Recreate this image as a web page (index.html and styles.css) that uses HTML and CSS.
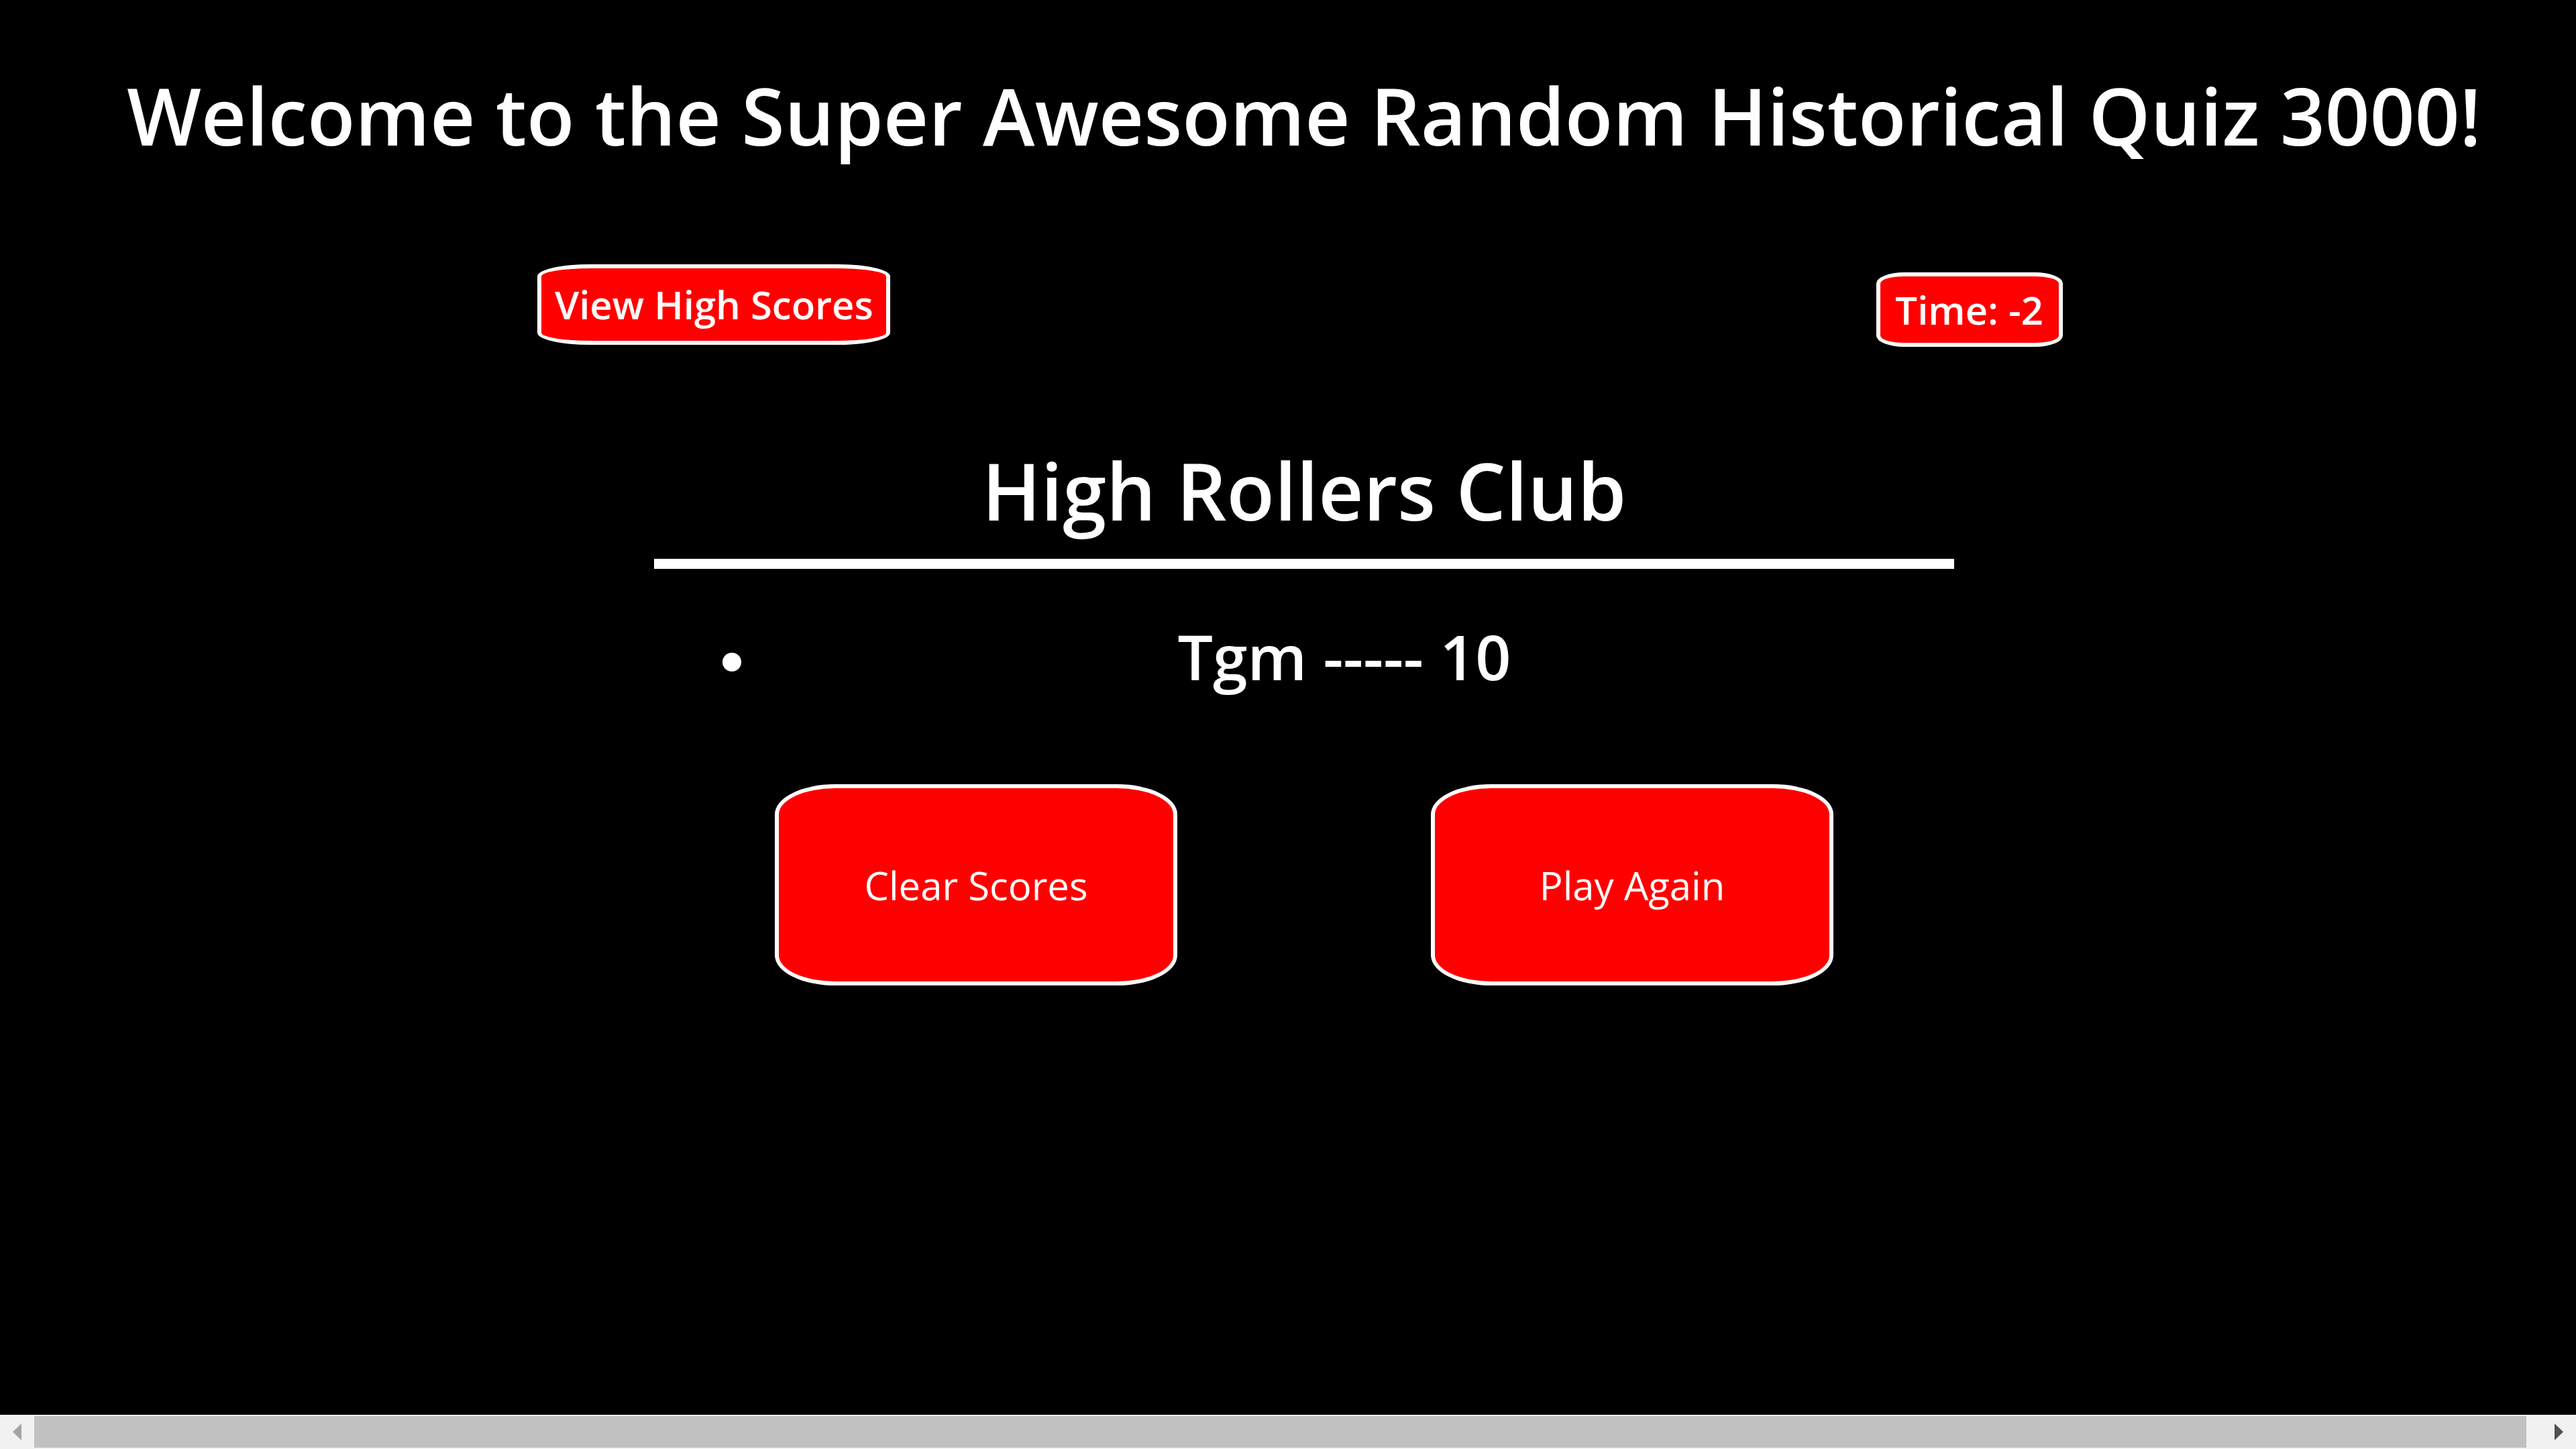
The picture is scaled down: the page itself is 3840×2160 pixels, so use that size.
FILE: index.html
```html
<!DOCTYPE html>
<html lang="en">
<head>
  <meta charset="utf-8">
  <meta name="viewport" content="width=device-width, initial-scale=1">
  <title>Super Awesome Random Historical Quiz 3000</title>
  <link rel="stylesheet" href="styles.css">
</head>
<body>
  <div class="page">
    <header>
      <h1 class="title">Welcome to the Super Awesome Random Historical Quiz 3000!</h1>
      <div class="toolbar">
        <button class="pill view-scores" type="button">View High Scores</button>
        <div class="pill timer">Time: -2</div>
      </div>
    </header>
    <main class="scores">
      <h2 class="scores-heading">High Rollers Club</h2>
      <ul class="score-list">
        <li>Tgm ----- 10</li>
      </ul>
      <div class="actions">
        <button class="action" type="button">Clear Scores</button>
        <button class="action" type="button">Play Again</button>
      </div>
    </main>
  </div>
  <div class="scrollbar">
    <button class="scroll-arrow scroll-left" type="button" aria-label="Scroll left" disabled>
      <svg width="51" height="51" viewBox="0 0 51 51" aria-hidden="true"><path d="M32 13v25L19 25.500z"/></svg>
    </button>
    <div class="scroll-thumb"></div>
    <button class="scroll-arrow" type="button" aria-label="Scroll right">
      <svg width="51" height="51" viewBox="0 0 51 51" aria-hidden="true"><path d="M19 13v25l13-12.500z"/></svg>
    </button>
  </div>
</body>
</html>
```
FILE: styles.css
```css
* {
  box-sizing: border-box;
}

body {
  display: flex;
  flex-direction: column;
  min-height: 100vh;
  margin: 0;
  background: #000;
  color: #fff;
  font-family: "Open Sans", sans-serif;
}

.page {
  flex: 1;
  padding: 92px 0 0 48px;
}

.title,
.scores-heading {
  margin: 0;
  font-size: 117px;
  font-weight: 600;
  line-height: 160px;
  text-align: center;
}

.title {
  white-space: nowrap;
}

.toolbar {
  display: flex;
  align-items: flex-start;
  justify-content: space-between;
  margin: 142px calc(20% + 7px) 0 calc(20% - 5px);
}

.pill,
.action {
  padding: 0;
  border: 6px solid #fff;
  border-radius: 15%;
  background: #f00;
  color: #fff;
  font-family: inherit;
  text-align: center;
}

.pill {
  font-size: 58px;
  font-weight: 600;
}

.view-scores {
  width: 526px;
  line-height: 108px;
}

.timer {
  width: 278px;
  margin-top: 12px;
  line-height: 99px;
}

.scores {
  width: calc(50% + 42px);
  margin: 134px auto 0;
}

.scores-heading {
  padding-bottom: 22px;
  border-bottom: 15px solid #fff;
}

.score-list {
  margin: 70px 44px 0;
  padding-left: 120px;
  font-size: 93px;
  font-weight: 600;
  line-height: 120px;
  text-align: center;
}

.score-list li::marker {
  font-size: 78px;
}

.actions {
  display: flex;
  justify-content: space-between;
  margin-top: 131px;
  padding: 0 180px;
}

.action {
  width: 600px;
  height: 300px;
  font-size: 58px;
}

.scrollbar {
  display: flex;
  align-items: center;
  height: 51px;
  background: #f1f1f1;
}

.scroll-arrow {
  width: 51px;
  height: 51px;
  padding: 0;
  border: 0;
  background: none;
  fill: #505050;
}

.scroll-left {
  fill: #a3a3a3;
}

.scroll-arrow svg {
  display: block;
}

.scroll-thumb {
  flex: 1;
  height: 47px;
  margin-right: 23px;
  background: #c1c1c1;
}
```
